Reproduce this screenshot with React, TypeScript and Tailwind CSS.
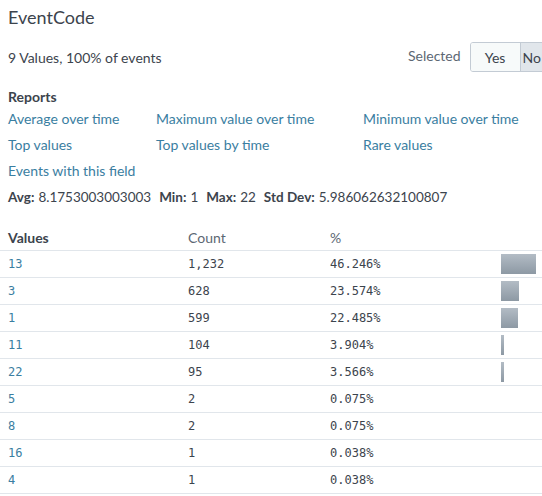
import React from "react";

const rows = [
  { v: "13", c: "1,232", p: 46.246 },
  { v: "3", c: "628", p: 23.574 },
  { v: "1", c: "599", p: 22.485 },
  { v: "11", c: "104", p: 3.904 },
  { v: "22", c: "95", p: 3.566 },
  { v: "5", c: "2", p: 0.075 },
  { v: "8", c: "2", p: 0.075 },
  { v: "16", c: "1", p: 0.038 },
  { v: "4", c: "1", p: 0.038 },
];

export default function App() {
  const sans = { fontFamily: "Lato, 'Open Sans', sans-serif" };
  return (
    <div className="w-[542px] h-[496px] overflow-hidden bg-white text-[#3c444d]" style={sans}>
      <div className="px-2 pt-[5px]">
        <div className="text-[18px] leading-[24px] text-[#3c444d]">EventCode</div>
        <div className="flex items-center justify-between mt-[13px] h-[30px] relative">
          <div className="text-[14px] text-[#3c444d] mt-[1px]">9 Values, 100% of events</div>
          <div className="absolute left-[400px] top-0 flex items-center">
            <span className="text-[14px] text-[#5c6773] mr-[9px] -mt-[4px]">Selected</span>
            <div className="flex h-[30px] border border-[#c3cbd4] rounded-[3px] overflow-hidden">
              <div className="w-[49px] flex items-center justify-center text-[14px] bg-[#f7fafa] text-[#3c444d]">Yes</div>
              <div className="w-[50px] flex items-center justify-start pl-[2px] text-[14px] bg-[#e1e6eb] border-l border-[#c3cbd4] text-[#3c444d]">No</div>
            </div>
          </div>
        </div>
        <div className="mt-[16px] text-[14px] font-bold leading-[18px]">Reports</div>
        <div className="text-[14px] text-[#3a7ea1] -mt-[1px]">
          <div className="flex h-[26px] items-center">
            <span className="w-[148px]">Average over time</span>
            <span className="w-[207px]">Maximum value over time</span>
            <span>Minimum value over time</span>
          </div>
          <div className="flex h-[26px] items-center">
            <span className="w-[148px]">Top values</span>
            <span className="w-[207px]">Top values by time</span>
            <span>Rare values</span>
          </div>
          <div className="flex h-[26px] items-center">
            <span>Events with this field</span>
          </div>
        </div>
        <div className="flex h-[26px] items-center text-[13.5px] text-[#3c444d] mt-[1px]">
          <span className="font-bold mr-1">Avg:</span>
          <span className="mr-[8px]">8.1753003003003</span>
          <span className="font-bold mr-1">Min:</span>
          <span className="mr-[8px]">1</span>
          <span className="font-bold mr-1">Max:</span>
          <span className="mr-[8px]">22</span>
          <span className="font-bold mr-1">Std Dev:</span>
          <span>5.986062632100807</span>
        </div>
      </div>
      <div className="mt-[14px]">
        <div className="grid grid-cols-[180px_142px_171px_1fr] h-[27px] items-center border-b border-[#e1e6eb] text-[14px]">
          <div className="pl-2 font-bold">Values</div>
          <div className="pl-2 text-[#5c6773]">Count</div>
          <div className="pl-2 text-[#5c6773]">%</div>
          <div />
        </div>
        {rows.map((r) => (
          <div
            key={r.v}
            className="grid grid-cols-[180px_142px_171px_1fr] h-[27px] items-center border-b border-[#e1e6eb] text-[12px]"
            style={{ fontFamily: "'DejaVu Sans Mono', monospace" }}
          >
            <div className="pl-2 text-[#3a7ea1]">{r.v}</div>
            <div className="pl-2 text-[#3c444d]">{r.c}</div>
            <div className="pl-2 text-[#3c444d]">{r.p.toFixed(3)}%</div>
            <div className="pl-2 flex items-center">
              {r.p * 0.76 >= 1 && (
                <div
                  className="h-[20px] bg-gradient-to-b from-[#b3bcc5] to-[#8d99a4]"
                  style={{ width: Math.round(r.p * 0.76) }}
                />
              )}
            </div>
          </div>
        ))}
      </div>
    </div>
  );
}
